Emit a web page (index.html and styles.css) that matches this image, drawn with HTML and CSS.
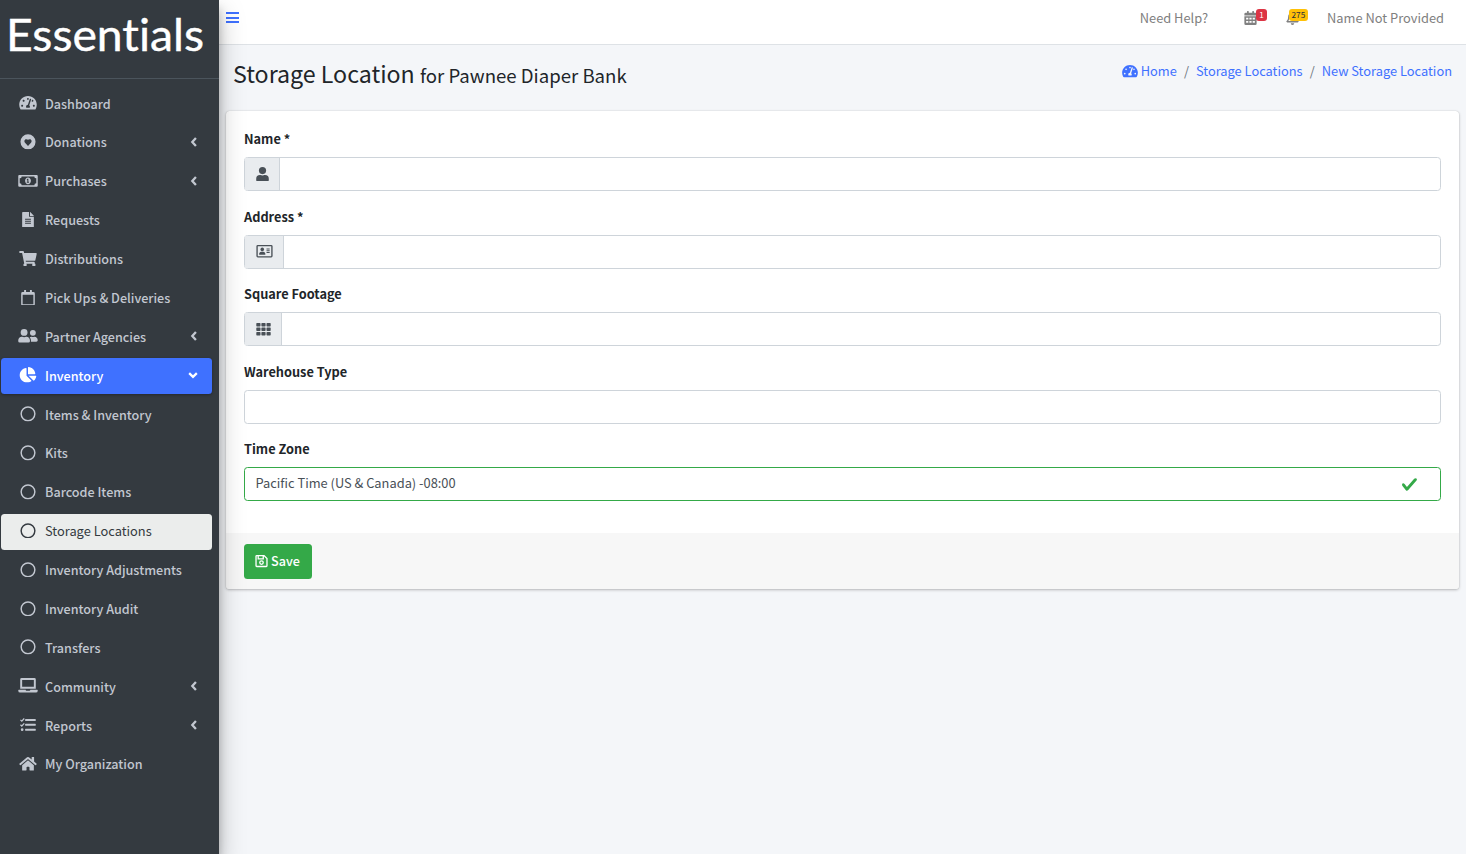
FILE: index.html
```html
<!DOCTYPE html>
<html lang="en">
<head>
<meta charset="utf-8">
<title>Storage Location</title>
<link rel="stylesheet" href="styles.css">
</head>
<body>
<svg class="defs" aria-hidden="true">
<symbol id="gauge" viewBox="0 0 576 512"><path d="M288 32C128.94 32 0 160.94 0 320c0 52.8 14.25 102.26 39.06 144.8 5.61 9.62 16.3 15.2 27.44 15.2h443c11.14 0 21.83-5.58 27.44-15.2C561.75 422.26 576 372.8 576 320c0-159.06-128.94-288-288-288zm0 64c14.71 0 26.58 10.13 30.32 23.65-1.11 2.26-2.64 4.23-3.45 6.67l-9.22 27.67c-5.13 3.49-10.97 6.01-17.64 6.01-17.67 0-32-14.33-32-32S270.33 96 288 96zM96 384c-17.67 0-32-14.33-32-32s14.33-32 32-32 32 14.33 32 32-14.33 32-32 32zm48-160c-17.67 0-32-14.33-32-32s14.33-32 32-32 32 14.33 32 32-14.33 32-32 32zm246.77-72.41l-61.33 184C343.13 347.33 352 364.54 352 384c0 11.72-3.38 22.55-8.88 32H232.88c-5.5-9.45-8.88-20.28-8.88-32 0-33.94 26.5-61.43 59.9-63.59l61.34-184.01c4.17-12.56 17.73-19.45 30.36-15.17 12.57 4.19 19.35 17.79 15.17 30.36zm14.66 57.2l15.52-46.55c3.47-1.29 7.13-2.23 11.05-2.23 17.67 0 32 14.33 32 32s-14.33 32-32 32c-11.38-.01-20.89-6.28-26.57-15.22zM480 384c-17.67 0-32-14.33-32-32s14.33-32 32-32 32 14.33 32 32-14.33 32-32 32z"/></symbol>
<symbol id="heart" viewBox="0 0 512 512"><path fill-rule="evenodd" d="M256 8a248 248 0 1 0 0 496 248 248 0 0 0 0-496zm0 382L158 289c-28-30-27-78 5-105 27-23 68-19 93 7 25-26 66-30 93-7 32 27 33 75 5 105z"/></symbol>
<symbol id="money" viewBox="0 0 640 512"><path fill-rule="evenodd" d="M32 64h576a32 32 0 0 1 32 32v320a32 32 0 0 1-32 32H32a32 32 0 0 1-32-32V96a32 32 0 0 1 32-32zm80 48a64 64 0 0 1-64 64v160a64 64 0 0 1 64 64h416a64 64 0 0 1 64-64V176a64 64 0 0 1-64-64z"/><path fill-rule="evenodd" d="M320 144c-53 0-96 50-96 112s43 112 96 112 96-50 96-112-43-112-96-112zm-24 48h36v98h20v30h-72v-30h20v-54l-18 5v-32z"/></symbol>
<symbol id="file" viewBox="0 0 384 512"><path fill-rule="evenodd" d="M224 136V0H24A24 24 0 0 0 0 24v464a24 24 0 0 0 24 24h336a24 24 0 0 0 24-24V160H248a24 24 0 0 1-24-24zM96 224h192v32H96zm0 64h192v32H96zm0 64h192v32H96zM256 0v128h128c0-8-3-12-7-17L273 7c-5-5-10-7-17-7z"/></symbol>
<symbol id="cart" viewBox="0 0 576 512"><path d="M528.12 301.319l47.273-208C578.806 78.301 567.391 64 551.99 64H159.208l-9.166-44.81C147.758 8.021 137.93 0 126.529 0H24C10.745 0 0 10.745 0 24v16c0 13.255 10.745 24 24 24h69.883l70.248 343.435C147.325 417.1 136 435.222 136 456c0 30.928 25.072 56 56 56s56-25.072 56-56c0-15.674-6.447-29.835-16.824-40h209.647C430.447 426.165 424 440.326 424 456c0 30.928 25.072 56 56 56s56-25.072 56-56c0-22.172-12.888-41.332-31.579-50.405l5.517-24.276c3.413-15.018-8.002-29.319-23.403-29.319H218.117l-6.545-32h293.145c11.206 0 20.92-7.754 23.403-18.681z"/></symbol>
<symbol id="calendar" viewBox="0 0 448 512"><path fill-rule="evenodd" d="M400 64h-48V12a12 12 0 0 0-12-12h-40a12 12 0 0 0-12 12v52H160V12a12 12 0 0 0-12-12h-40a12 12 0 0 0-12 12v52H48a48 48 0 0 0-48 48v352a48 48 0 0 0 48 48h352a48 48 0 0 0 48-48V112a48 48 0 0 0-48-48zm-6 400H54a6 6 0 0 1-6-6V160h352v298a6 6 0 0 1-6 6z"/></symbol>
<symbol id="users" viewBox="0 0 640 512"><circle cx="192" cy="144" r="112"/><circle cx="480" cy="160" r="96"/><path d="M269 288h-8c-44 21-94 21-138 0h-8C52 288 0 340 0 403v29a48 48 0 0 0 48 48h288a48 48 0 0 0 48-48v-29c0-63-52-115-115-115zm259 0h-4c-29 10-59 10-88 0h-4c-20 0-39 6-56 15 25 27 40 62 40 101v44h176a48 48 0 0 0 48-48c0-62-50-112-112-112z"/></symbol>
<symbol id="pie" viewBox="0 0 544 512"><path d="M527.79 288H290.5l158.03 158.03c6.04 6.04 15.98 6.53 22.19.68 38.7-36.46 65.32-85.61 73.13-140.86 1.34-9.46-6.51-17.85-16.06-17.85zm-15.83-64.8C503.72 103.74 408.26 8.28 288.8.04 279.68-.59 272 7.1 272 16.24V240h223.77c9.14 0 16.82-7.68 16.19-16.8zM224 288V50.71c0-9.55-8.39-17.4-17.84-16.06C86.99 51.49-4.1 155.6.14 280.37 4.5 408.51 114.83 513.59 243.03 511.98c50.4-.63 96.97-16.87 135.26-44.03 7.9-5.6 8.42-17.23 1.57-24.08L224 288z"/></symbol>
<symbol id="ring" viewBox="0 0 512 512"><circle cx="256" cy="256" r="225" fill="none" stroke="currentColor" stroke-width="48"/></symbol>
<symbol id="laptop" viewBox="0 0 640 512"><path fill-rule="evenodd" d="M112 0a48 48 0 0 0-48 48v304h512V48a48 48 0 0 0-48-48zm16 64h384v224H128zM16 384h228c0 18 14 32 33 32h86c18 0 32-14 32-32h229a16 16 0 0 1 16 16v16a64 64 0 0 1-64 64H64a64 64 0 0 1-64-64v-16a16 16 0 0 1 16-16z"/></symbol>
<symbol id="tasks" viewBox="0 0 512 512"><path d="M176 64h320a16 16 0 0 1 16 16v32a16 16 0 0 1-16 16H176a16 16 0 0 1-16-16V80a16 16 0 0 1 16-16zm0 160h320a16 16 0 0 1 16 16v32a16 16 0 0 1-16 16H176a16 16 0 0 1-16-16v-32a16 16 0 0 1 16-16zm0 160h320a16 16 0 0 1 16 16v32a16 16 0 0 1-16 16H176a16 16 0 0 1-16-16v-32a16 16 0 0 1 16-16z"/><circle cx="64" cy="416" r="44"/><path d="M8 94l44 42 82-88M8 254l44 42 82-88" fill="none" stroke="currentColor" stroke-width="40"/></symbol>
<symbol id="home" viewBox="0 0 576 512"><path d="M280.37 148.26L96 300.11V464a16 16 0 0 0 16 16l112.06-.29a16 16 0 0 0 15.92-16V368a16 16 0 0 1 16-16h64a16 16 0 0 1 16 16v95.64a16 16 0 0 0 16 16.05L464 480a16 16 0 0 0 16-16V300L295.67 148.26a12.19 12.19 0 0 0-15.3 0zM571.6 251.47L488 182.56V44.05a12 12 0 0 0-12-12h-56a12 12 0 0 0-12 12v72.61L318.47 43a48 48 0 0 0-61 0L4.34 251.47a12 12 0 0 0-1.6 16.9l25.5 31A12 12 0 0 0 45.15 301l235.22-193.74a12.19 12.19 0 0 1 15.3 0L530.9 301a12 12 0 0 0 16.9-1.6l25.5-31a12 12 0 0 0-1.7-16.93z"/></symbol>
<symbol id="left" viewBox="0 0 256 512"><path d="M198 112L66 256l132 144" fill="none" stroke="currentColor" stroke-width="84"/></symbol>
<symbol id="down" viewBox="0 0 320 512"><path d="M20 190l140 132 140-132" fill="none" stroke="currentColor" stroke-width="84"/></symbol>
<symbol id="days" viewBox="0 0 448 512"><path fill-rule="evenodd" d="M0 464a48 48 0 0 0 48 48h352a48 48 0 0 0 48-48V192H0zm64-216h80v64H64zm120 0h80v64h-80zm120 0h80v64h-80zM64 368h80v64H64zm120 0h80v64h-80zm120 0h80v64h-80zM400 64h-48V16a16 16 0 0 0-16-16h-32a16 16 0 0 0-16 16v48H160V16a16 16 0 0 0-16-16h-32a16 16 0 0 0-16 16v48H48a48 48 0 0 0-48 48v48h448v-48a48 48 0 0 0-48-48z"/></symbol>
<symbol id="bell" viewBox="0 0 448 512"><path fill-rule="evenodd" d="M439 362c-19-21-55-52-55-154 0-78-54-140-128-155V32a32 32 0 0 0-64 0v21C118 68 64 130 64 208c0 102-36 133-55 154-24 24-5 54 23 54h384c28 0 47-30 23-54zm-371 6c21-28 44-74 44-159 0-62 50-113 112-113s112 51 112 113c0 85 23 131 44 159zM160 448a64 64 0 0 0 128 0z"/></symbol>
<symbol id="user" viewBox="0 0 448 512"><circle cx="224" cy="128" r="128"/><path d="M314 288h-17c-46 21-100 21-146 0h-17A134 134 0 0 0 0 422v42a48 48 0 0 0 48 48h352a48 48 0 0 0 48-48v-42a134 134 0 0 0-134-134z"/></symbol>
<symbol id="card" viewBox="0 0 576 512"><rect x="24" y="56" width="528" height="400" rx="26" fill="none" stroke="currentColor" stroke-width="48"/><circle cx="208" cy="192" r="64"/><path d="M96 364c0-54 34-92 78-92 20 10 48 10 68 0 44 0 78 38 78 92 0 12-10 20-22 20H118c-12 0-22-8-22-20zm264-204h112v32H360zm0 64h112v32H360zm0 64h112v32H360z"/></symbol>
<symbol id="grid" viewBox="0 0 512 512"><path d="M24 32h101a24 24 0 0 1 24 24v80a24 24 0 0 1-24 24H24a24 24 0 0 1-24-24V56a24 24 0 0 1 24-24zm181 0h101a24 24 0 0 1 24 24v80a24 24 0 0 1-24 24H205a24 24 0 0 1-24-24V56a24 24 0 0 1 24-24zm182 0h101a24 24 0 0 1 24 24v80a24 24 0 0 1-24 24H387a24 24 0 0 1-24-24V56a24 24 0 0 1 24-24zM24 192h101a24 24 0 0 1 24 24v80a24 24 0 0 1-24 24H24a24 24 0 0 1-24-24v-80a24 24 0 0 1 24-24zm181 0h101a24 24 0 0 1 24 24v80a24 24 0 0 1-24 24H205a24 24 0 0 1-24-24v-80a24 24 0 0 1 24-24zm182 0h101a24 24 0 0 1 24 24v80a24 24 0 0 1-24 24H387a24 24 0 0 1-24-24v-80a24 24 0 0 1 24-24zM24 352h101a24 24 0 0 1 24 24v80a24 24 0 0 1-24 24H24a24 24 0 0 1-24-24v-80a24 24 0 0 1 24-24zm181 0h101a24 24 0 0 1 24 24v80a24 24 0 0 1-24 24H205a24 24 0 0 1-24-24v-80a24 24 0 0 1 24-24zm182 0h101a24 24 0 0 1 24 24v80a24 24 0 0 1-24 24H387a24 24 0 0 1-24-24v-80a24 24 0 0 1 24-24z"/></symbol>
<symbol id="save" viewBox="0 0 448 512"><path d="M48 56h270l106 106v270a24 24 0 0 1-24 24H48a24 24 0 0 1-24-24V80a24 24 0 0 1 24-24zM104 60v116h184V60" fill="none" stroke="currentColor" stroke-width="48"/><circle cx="224" cy="312" r="64" fill="none" stroke="currentColor" stroke-width="48"/></symbol>
<symbol id="check" viewBox="0 0 8 8"><path d="M2.3 6.73L.6 4.53c-.4-1.04.46-1.4 1.1-.8l1.1 1.4 3.4-3.8c.6-.63 1.6-.27 1.2.7l-4 4.6c-.43.5-.8.4-1.1.1z"/></symbol>
</svg>

<div class="app">
  <aside class="sidebar">
    <div class="brand"><svg class="logo" viewBox="0 0 219 78"><text x="6" y="51" textLength="198" lengthAdjust="spacingAndGlyphs">Essentials</text></svg></div>
    <nav class="menu">
      <a class="item"><svg class="wide"><use href="#gauge"/></svg><span>Dashboard</span></a>
      <a class="item"><svg><use href="#heart"/></svg><span>Donations</span><svg class="arrow"><use href="#left"/></svg></a>
      <a class="item"><svg><use href="#money"/></svg><span>Purchases</span><svg class="arrow"><use href="#left"/></svg></a>
      <a class="item"><svg><use href="#file"/></svg><span>Requests</span></a>
      <a class="item"><svg><use href="#cart"/></svg><span>Distributions</span></a>
      <a class="item"><svg><use href="#calendar"/></svg><span>Pick Ups &amp; Deliveries</span></a>
      <a class="item"><svg><use href="#users"/></svg><span>Partner Agencies</span><svg class="arrow"><use href="#left"/></svg></a>
      <a class="item open"><svg><use href="#pie"/></svg><span>Inventory</span><svg class="arrow down"><use href="#down"/></svg></a>
      <a class="item"><svg><use href="#ring"/></svg><span>Items &amp; Inventory</span></a>
      <a class="item"><svg><use href="#ring"/></svg><span>Kits</span></a>
      <a class="item"><svg><use href="#ring"/></svg><span>Barcode Items</span></a>
      <a class="item current"><svg><use href="#ring"/></svg><span>Storage Locations</span></a>
      <a class="item"><svg><use href="#ring"/></svg><span>Inventory Adjustments</span></a>
      <a class="item"><svg><use href="#ring"/></svg><span>Inventory Audit</span></a>
      <a class="item"><svg><use href="#ring"/></svg><span>Transfers</span></a>
      <a class="item"><svg><use href="#laptop"/></svg><span>Community</span><svg class="arrow"><use href="#left"/></svg></a>
      <a class="item"><svg><use href="#tasks"/></svg><span>Reports</span><svg class="arrow"><use href="#left"/></svg></a>
      <a class="item"><svg><use href="#home"/></svg><span>My Organization</span></a>
    </nav>
  </aside>

  <main class="main">
    <header class="topbar">
      <a class="burger"><i></i><i></i><i></i></a>
      <div class="tools">
        <a class="help">Need Help?</a>
        <a class="tool cal"><svg><use href="#days"/></svg><b class="badge red">1</b></a>
        <a class="tool alerts"><svg><use href="#bell"/></svg><b class="badge yellow">275</b></a>
        <a>Name Not Provided</a>
      </div>
    </header>

    <div class="heading">
      <h1>Storage Location <small>for Pawnee Diaper Bank</small></h1>
      <nav class="crumbs">
        <a><svg><use href="#gauge"/></svg>Home</a><span>/</span><a>Storage Locations</a><span>/</span><a>New Storage Location</a>
      </nav>
    </div>

    <form class="card">
      <div class="fields">
        <div class="field"><label>Name *</label><div class="control"><span class="addon name"><svg><use href="#user"/></svg></span></div></div>
        <div class="field"><label>Address *</label><div class="control"><span class="addon address"><svg><use href="#card"/></svg></span></div></div>
        <div class="field"><label>Square Footage</label><div class="control"><span class="addon footage"><svg><use href="#grid"/></svg></span></div></div>
        <div class="field"><label>Warehouse Type</label><div class="control"></div></div>
        <div class="field"><label>Time Zone</label><div class="control valid"><span>Pacific Time (US &amp; Canada) -08:00</span><svg><use href="#check"/></svg></div></div>
      </div>
      <div class="actions"><button type="button" class="save"><svg><use href="#save"/></svg>Save</button></div>
    </form>
  </main>
</div>
</body>
</html>
```
FILE: styles.css
```css
* { box-sizing: border-box; }
body {
  margin: 0;
  font-family: "Noto Sans CJK SC", sans-serif;
  font-size: 12.85px;
  line-height: 21px;
  color: #212529;
  background: #f4f6f9;
}
svg { fill: currentColor; display: block; flex: none; }
.defs { position: absolute; width: 0; height: 0; }
.app { display: flex; height: 854px; overflow: hidden; }

.sidebar {
  position: relative;
  z-index: 2;
  width: 219px;
  flex: none;
  background: #343a40;
  color: #c2c7d0;
  box-shadow: 0 12px 25px rgba(0,0,0,.25), 0 9px 9px rgba(0,0,0,.22);
}
.brand { height: 79px; border-bottom: 1px solid #4b545c; }
.logo { width: 219px; height: 78px; fill: #fff; stroke: #fff; stroke-width: .4px; }
.logo text { font-family: Lato, sans-serif; font-size: 45px; font-variant-ligatures: none; }
.menu { display: flex; flex-direction: column; gap: 2.88px; padding: 7px 7px 0 1px; }
.item { display: flex; align-items: center; height: 36px; padding: 0 10px 2px 16px; border-radius: 3.5px; font-size: 12.6px; font-weight: 500; }
.item svg { width: 22px; height: 15.6px; }
.item span { flex: 1; margin-left: 6px; white-space: nowrap; }
.item .arrow { width: 16px; height: 14px; }
.item .down { margin-right: 1px; }
.open { background: #3f71ff; color: #fff; box-shadow: 0 1px 3px rgba(0,0,0,.3); }
.current { background: #ebedec; color: #343a40; font-size: 12.85px; font-weight: 400; }

.main { flex: 1; min-width: 0; }
.topbar {
  display: flex;
  justify-content: space-between;
  height: 45px;
  padding: 7px 22px 0 7px;
  background: #fff;
  border-bottom: 1px solid #dee2e6;
  color: #808080;
}
.burger { display: flex; flex-direction: column; gap: 2.5px; width: 13px; padding-top: 5px; }
.burger i { height: 2px; background: #3f71ff; }
.tools { display: flex; }
.tool { position: relative; padding-top: 4px; }
.tool svg { width: 13px; height: 14px; }
.cal { margin-left: 36px; margin-right: 29px; }
.alerts { margin-right: 28px; }
.badge {
  position: absolute;
  left: 12px;
  top: 2px;
  height: 12px;
  padding: 0 3.1px;
  border-radius: 3px;
  font-size: 8.2px;
  line-height: 11.5px;
  font-weight: 400;
}
.alerts .badge { left: 3px; padding: 0 2.5px; }
.red { background: #dc3545; color: #fff; }
.yellow { background: #ffc107; color: #1f2d3d; }

.heading { display: flex; justify-content: space-between; align-items: flex-start; height: 66px; padding: 12px 14px 0; }
h1 { margin: 0; font-size: 23.2px; line-height: 32px; font-weight: 400; }
h1 small { font-size: 18.6px; }
.crumbs { display: flex; gap: 7px; padding-top: 3px; color: #6c757d; }
.crumbs a { display: flex; align-items: center; gap: 3px; color: #3f71ff; }
.crumbs svg { width: 16px; height: 14px; }

.card {
  margin: 0 7px;
  height: 478px;
  border-radius: 3.5px;
  background: #fff;
  overflow: hidden;
  box-shadow: 0 0 1px rgba(0,0,0,.2), 0 1px 3px rgba(0,0,0,.25);
}
.fields { height: 422px; padding: 17px 18px 0; }
.field { height: 77.5px; }
label { display: block; height: 29px; line-height: 21px; font-size: 12.75px; font-weight: 700; }
.control {
  display: flex;
  align-items: center;
  justify-content: space-between;
  height: 34.4px;
  border: 1px solid #ced4da;
  border-radius: 3.5px;
  color: #495057;
}
.addon { display: flex; align-items: center; justify-content: center; height: 100%; padding-bottom: 1px; background: #e9ecef; border-right: 1px solid #ced4da; }
.addon svg { height: 14.4px; width: 17px; }
.name { width: 35px; }
.address { width: 39px; }
.footage { width: 37px; }
.valid { border-color: #34a948; padding: 0 22px 0 10.5px; }
.valid span { padding-bottom: 3px; }
.valid svg { width: 17px; height: 17px; color: #34a948; }
.actions { height: 56px; padding: 11px 18px; background: #f7f7f7; }
.save {
  display: flex;
  align-items: center;
  gap: 3px;
  width: 68px;
  height: 35px;
  padding: 0 11px 2px;
  border: 0;
  border-radius: 3.5px;
  background: #34a948;
  color: #fff;
  font: inherit;
  font-size: 12.6px;
  font-weight: 500;
}
.save svg { width: 13px; height: 14px; }
```
